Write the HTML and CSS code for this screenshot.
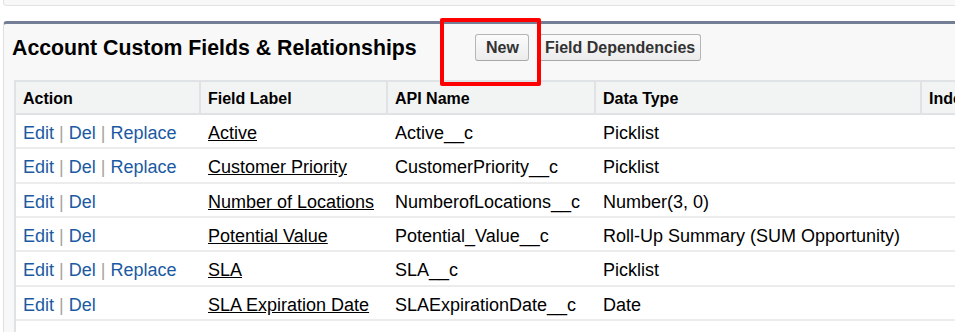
FILE: index.html
```html
<!DOCTYPE html>
<html lang="en">
<head>
    <meta charset="UTF-8">
    <title>Account Custom Fields &amp; Relationships</title>
    <link rel="stylesheet" href="styles.css">
</head>
<body>
    <div class="prev-block"></div>

    <div class="block">
        <div class="block-header">
            <h2 class="block-title">Account Custom Fields &amp; Relationships</h2>
            <div class="block-buttons">
                <span class="btn-wrap">
                    <button class="btn btn-new">New</button>
                    <span class="highlight"></span>
                </span>
                <button class="btn btn-deps">Field Dependencies</button>
            </div>
        </div>

        <table class="fields">
            <colgroup>
                <col class="c-action">
                <col class="c-label">
                <col class="c-api">
                <col class="c-type">
                <col class="c-index">
            </colgroup>
            <tr>
                <th>Action</th>
                <th>Field Label</th>
                <th>API Name</th>
                <th>Data Type</th>
                <th>Indexed</th>
            </tr>
            <tr>
                <td><a href="#">Edit</a> <span class="sep">|</span> <a href="#">Del</a> <span class="sep">|</span> <a href="#">Replace</a></td>
                <td><a class="label" href="#">Active</a></td>
                <td>Active__c</td>
                <td>Picklist</td>
                <td></td>
            </tr>
            <tr>
                <td><a href="#">Edit</a> <span class="sep">|</span> <a href="#">Del</a> <span class="sep">|</span> <a href="#">Replace</a></td>
                <td><a class="label" href="#">Customer Priority</a></td>
                <td>CustomerPriority__c</td>
                <td>Picklist</td>
                <td></td>
            </tr>
            <tr>
                <td><a href="#">Edit</a> <span class="sep">|</span> <a href="#">Del</a></td>
                <td><a class="label" href="#">Number of Locations</a></td>
                <td>NumberofLocations__c</td>
                <td>Number(3, 0)</td>
                <td></td>
            </tr>
            <tr>
                <td><a href="#">Edit</a> <span class="sep">|</span> <a href="#">Del</a></td>
                <td><a class="label" href="#">Potential Value</a></td>
                <td>Potential_Value__c</td>
                <td>Roll-Up Summary (SUM Opportunity)</td>
                <td></td>
            </tr>
            <tr>
                <td><a href="#">Edit</a> <span class="sep">|</span> <a href="#">Del</a> <span class="sep">|</span> <a href="#">Replace</a></td>
                <td><a class="label" href="#">SLA</a></td>
                <td>SLA__c</td>
                <td>Picklist</td>
                <td></td>
            </tr>
            <tr>
                <td><a href="#">Edit</a> <span class="sep">|</span> <a href="#">Del</a></td>
                <td><a class="label" href="#">SLA Expiration Date</a></td>
                <td>SLAExpirationDate__c</td>
                <td>Date</td>
                <td></td>
            </tr>
            <tr>
                <td>&nbsp;</td>
                <td></td>
                <td></td>
                <td></td>
                <td></td>
            </tr>
        </table>
    </div>
</body>
</html>
```

FILE: styles.css
```css
/* General */
body {
    margin: 0;
    background: #fff;
    font-family: "Liberation Sans", Arial, sans-serif;
    color: #000;
    overflow: hidden;
}

/* Block above (cut off) */
.prev-block {
    margin-left: 3px;
    height: 5px;
    background: #f8f8f8;
    border: 1px solid #e3e3e3;
    border-top: none;
    border-right: none;
    border-radius: 0 0 0 4px;
}

/* Page block */
.block {
    margin: 15px 0 0 3px;
    background: #f8f8f8;
    border-top: 3px solid #747e96;
    border-left: 1px solid #e0e0e0;
    border-radius: 4px 0 0 0;
    padding-left: 10px;
}

.block-header {
    display: flex;
    align-items: flex-start;
    height: 46px;
    padding-top: 10px;
}

.block-title {
    margin: 1px 0 0 -2px;
    width: 463px;
    font-size: 21.3px;
    line-height: 27px;
    font-weight: bold;
    color: #000;
}

.block-buttons {
    display: flex;
    gap: 10px;
}

.btn-wrap {
    position: relative;
}

.btn {
    height: 27px;
    padding: 0 5px;
    font-family: "Liberation Sans", Arial, sans-serif;
    font-size: 16px;
    font-weight: bold;
    color: #333;
    background: linear-gradient(#fbfbfb, #ececec);
    border: 1px solid #b5b5b5;
    border-bottom-color: #a8a8a8;
    border-radius: 3px;
}

.btn-new {
    padding: 0 9px 0 10px;
}

/* Red annotation box */
.highlight {
    position: absolute;
    left: -35px;
    top: -16px;
    width: 101px;
    height: 68px;
    box-sizing: border-box;
    border: 4px solid #fe0000;
    border-radius: 2px;
    z-index: 2;
}

/* Table */
.fields {
    table-layout: fixed;
    border-collapse: separate;
    border-spacing: 0;
    border-top: 2px solid #e0e3e5;
    border-left: 2px solid #e0e3e5;
    background: #fff;
    width: 1100px;
}

.c-action { width: 185px; }
.c-label { width: 187px; }
.c-api { width: 208px; }
.c-type { width: 326px; }
.c-index { width: 194px; }

th, td {
    box-sizing: border-box;
    text-align: left;
    white-space: nowrap;
    vertical-align: middle;
}

th {
    background: #f2f3f3;
    font-size: 16px;
    font-weight: bold;
    line-height: 19px;
    padding: 7px 7px 5px;
    border-right: 2px solid #e0e3e5;
    border-bottom: 2px solid #e0e3e5;
}

td {
    font-size: 18px;
    line-height: 20px;
    padding: 8px 7px 4.33px;
    border-bottom: 2px solid #ececec;
}

td a {
    color: #1b5aa2;
    text-decoration: none;
}

td a.label {
    color: #000;
    text-decoration: underline;
}

.sep {
    color: #a9a49e;
}
```
